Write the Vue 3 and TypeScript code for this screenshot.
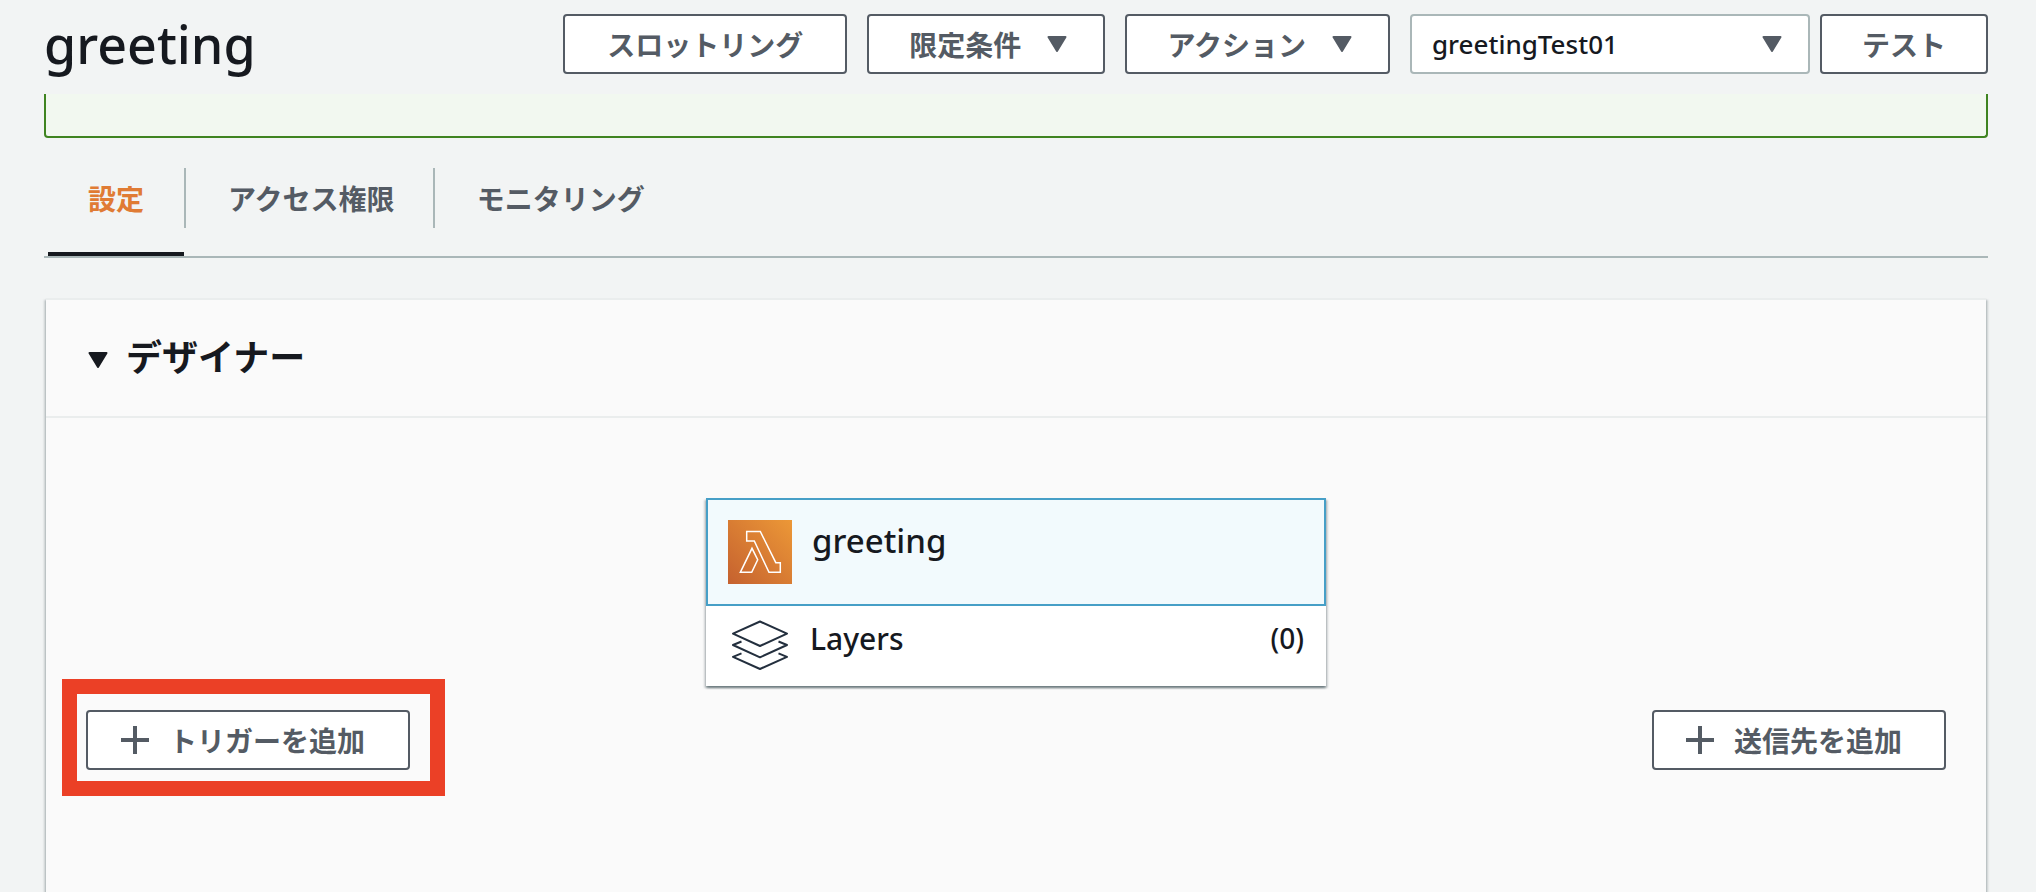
<script setup lang="ts">
import { ref } from 'vue'

interface Tab {
  id: string
  label: string
}

const functionName = 'greeting'
const tabs: Tab[] = [
  { id: 'config', label: '設定' },
  { id: 'permissions', label: 'アクセス権限' },
  { id: 'monitoring', label: 'モニタリング' },
]
const activeTab = ref('config')
const testEvents = ['greetingTest01']
const selectedEvent = ref('greetingTest01')
const layerCount = 0
</script>

<template>
  <div class="page">
    <header class="topbar">
      <h1 class="title">{{ functionName }}</h1>
      <div class="actions">
        <button type="button" class="btn throttle">スロットリング</button>
        <button type="button" class="btn">
          限定条件
          <svg class="caret" viewBox="0 0 20 16" aria-hidden="true"><path d="M1.500 1H18.500L10 15Z" /></svg>
        </button>
        <button type="button" class="btn">
          アクション
          <svg class="caret" viewBox="0 0 20 16" aria-hidden="true"><path d="M1.500 1H18.500L10 15Z" /></svg>
        </button>
        <div class="test-group">
          <div class="select-wrap">
            <select v-model="selectedEvent" class="select" aria-label="テストイベント">
              <option v-for="event in testEvents" :key="event" :value="event">{{ event }}</option>
            </select>
            <svg class="caret select-caret" viewBox="0 0 20 16" aria-hidden="true"><path d="M1.500 1H18.500L10 15Z" /></svg>
          </div>
          <button type="button" class="btn">テスト</button>
        </div>
      </div>
    </header>

    <main class="content">
      <div class="alert" role="status"></div>

      <nav class="tabs" role="tablist">
        <button
          v-for="tab in tabs"
          :key="tab.id"
          type="button"
          role="tab"
          class="tab"
          :class="{ active: tab.id === activeTab }"
          :aria-selected="tab.id === activeTab"
          @click="activeTab = tab.id"
        >
          <span class="tab-label">{{ tab.label }}</span>
        </button>
      </nav>

      <section class="panel">
        <h2 class="panel-header">
          <button type="button" class="toggle" aria-expanded="true">
            <svg class="caret" viewBox="0 0 20 16" aria-hidden="true"><path d="M1.500 1H18.500L10 15Z" /></svg>
            デザイナー
          </button>
        </h2>

        <div class="designer">
          <div class="card">
            <button type="button" class="card-row selected">
              <svg class="lambda" viewBox="0 0 64 64" aria-hidden="true">
                <defs>
                  <linearGradient id="lambda-fill" x1="0" y1="1" x2="1" y2="0">
                    <stop offset="0" stop-color="#c5612f" />
                    <stop offset="1" stop-color="#ec9837" />
                  </linearGradient>
                </defs>
                <rect width="64" height="64" fill="url(#lambda-fill)" />
                <g fill="none" stroke="#fff" stroke-width="1.500">
                  <path d="M18.700 11.500H32.300L47.800 42.700H52.300V52.300H41L26.300 21H18.700Z" />
                  <path d="M12.300 52.300L24 28.300L29.700 39.700L23.700 52.300Z" />
                </g>
              </svg>
              <span class="card-name">{{ functionName }}</span>
            </button>
            <button type="button" class="card-row layers">
              <svg class="layers-icon" viewBox="0 0 56 50" aria-hidden="true">
                <g fill="none" stroke="#232f3e" stroke-width="2" stroke-linejoin="round">
                  <path d="M28 1.500L55 13.700L28 26L1 13.700Z" />
                  <path d="M9.500 21.500L1 25L28 37.300L55 25L46.500 21.500" />
                  <path d="M9.500 33.300L1 36.800L28 49L55 36.800L46.500 33.300" />
                </g>
              </svg>
              <span class="layers-name">Layers</span>
              <span class="layers-count">({{ layerCount }})</span>
            </button>
          </div>

          <div class="connections">
            <div class="highlight">
              <button type="button" class="btn add add-trigger">
                <svg class="plus" viewBox="0 0 28 28" aria-hidden="true"><path d="M14 0V28M0 14H28" /></svg>
                トリガーを追加
              </button>
            </div>
            <button type="button" class="btn add">
              <svg class="plus" viewBox="0 0 28 28" aria-hidden="true"><path d="M14 0V28M0 14H28" /></svg>
              送信先を追加
            </button>
          </div>
        </div>
      </section>
    </main>
  </div>
</template>

<style>
body {
  margin: 0;
  background: #f2f4f4;
}
</style>

<style scoped>
.page {
  box-sizing: border-box;
  display: flex;
  flex-direction: column;
  min-height: 100vh;
  padding: 0 48px 0 44px;
  background: #f2f4f4;
  color: #16191f;
  font-family: 'Noto Sans', 'Noto Sans CJK JP', sans-serif;
  font-size: 28px;
  font-weight: 500;
}

button,
select {
  margin: 0;
  font: inherit;
  color: inherit;
  cursor: pointer;
}

.topbar {
  box-sizing: border-box;
  display: flex;
  align-items: center;
  justify-content: space-between;
  height: 94px;
  padding-bottom: 6px;
}

.title {
  margin: 0;
  font-size: 52px;
  line-height: 62px;
  font-weight: 500;
}

.actions {
  display: flex;
  gap: 20px;
}

.test-group {
  display: flex;
  gap: 10px;
}

.btn {
  box-sizing: border-box;
  display: flex;
  align-items: center;
  justify-content: center;
  height: 60px;
  padding: 0 40px;
  border: 2px solid #545b64;
  border-radius: 4px;
  background: #fff;
  color: #545b64;
  font-family: 'Noto Sans CJK JP', sans-serif;
  font-weight: 700;
  line-height: 40px;
  white-space: nowrap;
}

.throttle {
  min-width: 284px;
}

.caret {
  flex: none;
  width: 20px;
  height: 16px;
}

.caret path {
  fill: currentColor;
  stroke: currentColor;
  stroke-width: 2;
  stroke-linejoin: round;
}

.btn .caret {
  margin: 0 -4px 0 26px;
}

.select-wrap {
  position: relative;
  width: 400px;
  color: #545b64;
}

.select {
  box-sizing: border-box;
  width: 100%;
  height: 60px;
  padding: 0 60px 0 20px;
  border: 2px solid #aab7b8;
  border-radius: 4px;
  background: #fff;
  color: #16191f;
  font-size: 26px;
  appearance: none;
}

.select-caret {
  position: absolute;
  top: 22px;
  right: 28px;
  pointer-events: none;
}

.content {
  display: flex;
  flex: 1;
  flex-direction: column;
}

.alert {
  box-sizing: border-box;
  height: 44px;
  border: 2px solid #3f8420;
  border-top: 0;
  border-radius: 0 0 4px 4px;
  background: #f2f8f0;
}

.tabs {
  display: flex;
  padding: 30px 0 0 4px;
  border-bottom: 2px solid #aab7b8;
}

.tab {
  padding: 0 0 24px;
  border: 0;
  border-bottom: 4px solid transparent;
  background: none;
  color: #545b64;
  font-family: 'Noto Sans CJK JP', sans-serif;
  font-weight: 700;
}

.tab-label {
  display: block;
  padding: 0 40px;
  line-height: 60px;
}

.tab + .tab .tab-label {
  padding: 0 38px 0 42px;
  border-left: 2px solid #aab7b8;
}

.tab.active {
  border-bottom-color: #16191f;
  color: #e07b34;
}

.panel {
  display: flex;
  flex: 1;
  flex-direction: column;
  margin: 40px 2px 0;
  border-top: 2px solid #eaeded;
  background: #fafafa;
  box-shadow:
    0 2px 2px rgba(0, 28, 36, 0.3),
    2px 2px 2px rgba(0, 28, 36, 0.15),
    -2px 2px 2px rgba(0, 28, 36, 0.15);
}

.panel-header {
  margin: 0;
  padding: 30px 40px;
  border-bottom: 2px solid #eaeded;
}

.toggle {
  display: flex;
  align-items: center;
  gap: 18px;
  padding: 0 2px;
  border: 0;
  background: none;
  font-size: 36px;
  font-weight: 700;
  line-height: 56px;
}

.toggle .caret {
  margin-top: 4px;
}

.designer {
  display: flex;
  flex-direction: column;
  gap: 24px;
  padding: 80px 40px;
}

.card {
  align-self: center;
  width: 620px;
  max-width: 100%;
  background: #fff;
  box-shadow:
    0 2px 2px rgba(0, 28, 36, 0.4),
    2px 2px 2px rgba(0, 28, 36, 0.15),
    -2px 2px 2px rgba(0, 28, 36, 0.15);
}

.card-row {
  box-sizing: border-box;
  display: flex;
  align-items: flex-start;
  width: 100%;
  padding: 20px;
  border: 2px solid transparent;
  background: none;
  text-align: left;
}

.card-row.selected {
  border-color: #469fc7;
  background: #f1faff;
  background: #f2fafd;
}

.lambda {
  flex: none;
  width: 64px;
  height: 64px;
}

.card-name {
  margin-left: 20px;
  font-size: 33px;
  line-height: 42px;
}

.card-row.layers {
  height: 80px;
  padding: 12px 20px 12px 24px;
}

.layers-icon {
  flex: none;
  width: 56px;
  height: 50px;
}

.layers-name {
  flex: 1;
  margin-left: 22px;
  font-size: 30px;
  line-height: 38px;
}

.layers-count {
  font-size: 28px;
  line-height: 36px;
}

.connections {
  display: flex;
  justify-content: space-between;
}

.highlight {
  position: relative;
}

.highlight::after {
  position: absolute;
  inset: -31px -35px -26px -24px;
  border: 15px solid #eb4026;
  content: '';
  pointer-events: none;
}

.add {
  gap: 20px;
  padding: 0 42px 0 32px;
}

.add-trigger {
  min-width: 324px;
}

.plus {
  flex: none;
  width: 28px;
  height: 28px;
}

.plus path {
  fill: none;
  stroke: currentColor;
  stroke-width: 4;
}
</style>
